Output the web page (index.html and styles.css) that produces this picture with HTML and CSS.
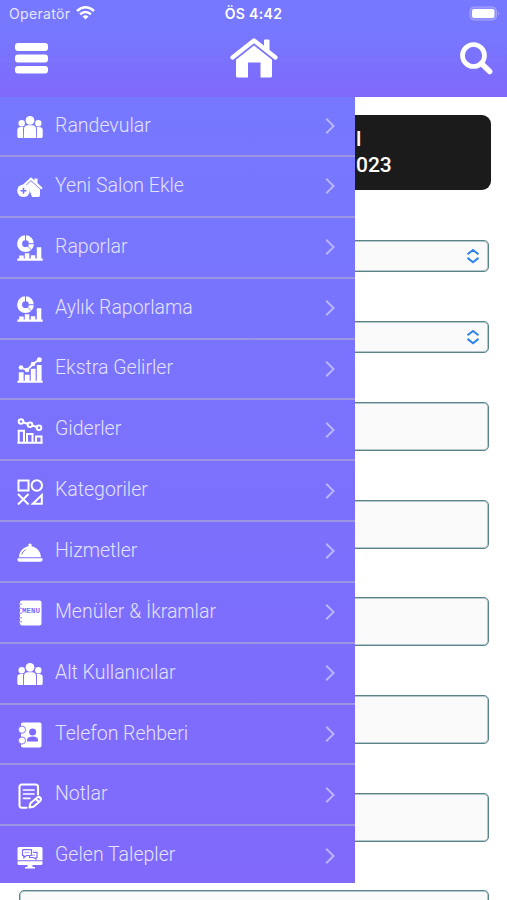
FILE: index.html
```html
<!DOCTYPE html>
<html lang="tr">
<head>
<meta charset="utf-8">
<title>Menü</title>
<link rel="stylesheet" href="styles.css">
</head>
<body>
<svg class="defs" width="0" height="0">
  <symbol id="people" viewBox="0 0 26 26">
    <circle cx="4.700" cy="9.200" r="3.200"/><circle cx="21.300" cy="9.200" r="3.200"/><circle cx="13" cy="6.400" r="4.400"/>
    <path d="M7 24V15.500Q7 11.300 11 11.300H15Q19 11.300 19 15.500V24ZM6.200 24H2Q.300 24 .300 22.500V16Q.300 13 4 13H6.400Q6 14 6 15.500ZM19.800 24H24Q25.700 24 25.700 22.500V16Q25.700 13 22 13H19.600Q20 14 20 15.500Z"/>
  </symbol>
  <symbol id="salon" viewBox="0 0 26 26">
    <path d="M5 11.500L14 3.300L17.500 6.300V4.500H20.500V9.100L25.700 14L24.200 15.500L14 6.200L7 12.500Z"/>
    <path d="M14 7.200L23 15.200V21Q23 23 21.500 23H15L11.500 13.200L8 12.200Z"/>
    <circle cx="6.500" cy="16.800" r="6.300"/><path d="M6.500 13.800V19.800M3.500 16.800H9.500" stroke="#7774ff" stroke-width="1.600"/>
  </symbol>
  <symbol id="report" viewBox="0 0 26 26">
    <circle cx="8.500" cy="8.700" r="5.900" fill="none" stroke="currentColor" stroke-width="5"/>
    <path d="M8.500 0V6M12 8.700H17.500" stroke="#7774ff" stroke-width="1"/>
    <path d="M10.500 11L14.500 15" stroke="#7774ff" stroke-width=".8"/>
    <path d="M.3 23.600H25.700V25.700H.3ZM2.200 20.500H6.700V24H2.200ZM7.800 18.200H12.300V24H7.800ZM13.800 20.200H18.300V24H13.800ZM19.800 12.200H24.300V24H19.800Z"/>
  </symbol>
  <symbol id="growth" viewBox="0 0 26 26">
    <path d="M.3 23.800H25.700V25.700H.3ZM1.800 15.300H6.600V24.500H1.800ZM7.800 17.800H12.600V24.500H7.800ZM13.800 11.800H18.600V24.500H13.800ZM19.800 8H24.600V24.500H19.800Z"/>
    <path d="M4 10.500L10 13.200L16 7L22 2.800" fill="none" stroke="currentColor" stroke-width="1.800"/>
    <circle cx="4" cy="10.500" r="2.300"/><circle cx="10" cy="13" r="2.300"/><circle cx="16" cy="7" r="2.300"/><circle cx="22.300" cy="2.800" r="2.500"/>
  </symbol>
  <symbol id="decline" viewBox="0 0 26 26">
    <g fill="none" stroke="currentColor" stroke-width="2">
      <circle cx="4" cy="3.500" r="2.300"/><circle cx="13" cy="6.700" r="2.300"/><circle cx="22" cy="9.700" r="2.300"/>
      <path d="M6 4.300L11 6M15 7.400L20 9M.3 24.800H25.700M1.700 25V12.800H7V25M10 25V16H15.500V25M19 25V18.500H24.500V25"/>
    </g>
  </symbol>
  <symbol id="shapes" viewBox="0 0 26 26">
    <g fill="none" stroke="currentColor" stroke-width="2">
      <rect x="1.500" y="1.500" width="10" height="10"/><circle cx="19.800" cy="6.500" r="5.200"/>
      <path d="M1 15L11.500 25.500M11.500 15L1 25.500M24.800 16V24.700H15.800Z"/>
    </g>
  </symbol>
  <symbol id="cloche" viewBox="0 0 26 26">
    <path d="M2 18.300C2.300 12 6.500 8 11.500 7.300Q10.800 4.500 13 4.500T14.500 7.300C19.500 8 23.700 12 24 18.300ZM.5 19.300H25.500V20.800Q25.500 22.700 23.500 22.700H2.500Q.5 22.700 .5 20.800Z"/>
    <path d="M4.700 15.500Q5.500 12.300 8.500 10.800" fill="none" stroke="#7c6eff" stroke-width="1"/>
  </symbol>
  <symbol id="contacts" viewBox="0 0 26 26">
    <rect x="4" y=".5" width="20.500" height="25" rx="1.800"/>
    <g stroke="#7f6aff" stroke-width=".9"><circle cx="5" cy="7.700" r="3.600"/><circle cx="5" cy="18.500" r="3.600"/></g>
    <g fill="#7f6aff"><circle cx="15.600" cy="10" r="3.500"/><path d="M10 19.500V18Q10 14.500 15.600 14.500T21 18V19.500Z"/></g>
  </symbol>
  <symbol id="note" viewBox="0 0 26 26">
    <g fill="none" stroke="currentColor" stroke-width="2.100" stroke-linecap="round" stroke-linejoin="round">
      <path d="M9.500 24.700H5Q2.500 24.700 2.500 22.200V4Q2.500 1.500 5 1.500H18.500Q21 1.500 21 4V11.500"/>
      <path d="M6.500 7H17M6.500 11H17M6.500 15.300H13" stroke-width="1.700"/>
      <path d="M12.500 24.500L13.400 20.200L20.500 14.300Q22 13.400 23.300 14.700T23.200 18L16.500 23.700ZM19 16L21.700 19"/>
    </g>
  </symbol>
  <symbol id="requests" viewBox="0 0 26 26">
    <path d="M2 3H24Q25.500 3 25.500 4.500V16.200H.5V4.500Q.5 3 2 3ZM.5 17.200H25.500V19.500Q25.500 21 24 21H15.500V23H18V24.500H8V23H10.500V21H2Q.5 21 .5 19.500Z"/>
    <path d="M6 5.700H14.500V11.500H9.500L6.800 13.700V11.500H5.500V6.200ZM16 8.300H20V13.500H19V15.200L16.500 13.500H12.500V12" fill="none" stroke="#806aff" stroke-width="1.200"/>
    <path d="M7.500 8.600H12.500M14.500 11.200H18" stroke="#a9a0ff" stroke-width="1"/>
  </symbol>
  <symbol id="chevron" viewBox="0 0 10 18"><path d="M1.200 1.700L8.600 9L1.200 16.300" fill="none" stroke="#bbb6ff" stroke-width="1.900"/></symbol>
  <symbol id="updown" viewBox="0 0 14 16"><path d="M1.500 6.200L7 1.900L12.500 6.200M1.500 9.900L7 14.200L12.500 9.900" fill="none" stroke="#2e83ea" stroke-width="2"/></symbol>
</svg>

<div class="screen">
  <header class="top">
    <div class="status">
      <div class="carrier"><span>Operatör</span>
        <svg width="19" height="14" viewBox="0 0 19 14"><g fill="none" stroke="#fff" stroke-width="2.500"><path d="M1 5Q9.500-2.400 18 5"/><path d="M4.100 8.300Q9.500 3.600 14.900 8.300"/></g><path d="M6.500 10.600Q9.500 8 12.500 10.600L9.500 13.600Z" fill="#fff"/></svg>
      </div>
      <div class="clock">ÖS 4:42</div>
      <div class="battery">
        <svg width="32" height="15" viewBox="0 0 32 15"><rect x="1" y="1" width="26.500" height="13" rx="4" fill="#8d8dff" stroke="#a5a4ff"/><rect x="3" y="3" width="22.500" height="9" rx="2" fill="#fff"/><path d="M29 5.500Q31 7.500 29 9.500Z" fill="#a5a4ff"/></svg>
      </div>
    </div>
    <nav class="bar">
      <svg width="33" height="31" viewBox="0 0 33 31" fill="#fff"><rect width="33" height="8" rx="3"/><rect y="11.500" width="33" height="8" rx="3"/><rect y="23" width="33" height="7.500" rx="3"/></svg>
      <svg width="48" height="42" viewBox="0 0 48 42"><path d="M2.500 20.500L24 3.500L45.500 20.500" fill="none" stroke="#fff" stroke-width="4.200" stroke-linecap="round" stroke-linejoin="round"/><path d="M34 3.500Q34 2.500 35 2.500H38.500Q39.500 2.500 39.500 3.500V14.500L34 10ZM24 8.500L42 22.700V39Q42 40.500 40.500 40.500H30.500V25.500H18V40.500H7.500Q6 40.500 6 39V22.700Z" fill="#fff"/></svg>
      <svg width="33" height="33" viewBox="0 0 33 33"><circle cx="13.500" cy="13.500" r="11" fill="none" stroke="#fff" stroke-width="4.700"/><path d="M21.500 21.500L29.700 29.500" stroke="#fff" stroke-width="5.400" stroke-linecap="round"/></svg>
    </nav>
  </header>

  <main class="form">
    <div class="summary"><span>l</span><span>023</span></div>
    <div class="field select"><svg width="14" height="16"><use href="#updown"/></svg></div>
    <div class="field select"><svg width="14" height="16"><use href="#updown"/></svg></div>
    <div class="field"></div>
    <div class="field"></div>
    <div class="field"></div>
    <div class="field"></div>
    <div class="field"></div>
    <div class="field"></div>
  </main>

  <aside class="drawer">
    <a class="item"><svg class="ico"><use href="#people"/></svg><span>Randevular</span><svg class="chev"><use href="#chevron"/></svg></a>
    <a class="item"><svg class="ico"><use href="#salon"/></svg><span>Yeni Salon Ekle</span><svg class="chev"><use href="#chevron"/></svg></a>
    <a class="item"><svg class="ico"><use href="#report"/></svg><span>Raporlar</span><svg class="chev"><use href="#chevron"/></svg></a>
    <a class="item"><svg class="ico"><use href="#report"/></svg><span>Aylık Raporlama</span><svg class="chev"><use href="#chevron"/></svg></a>
    <a class="item"><svg class="ico"><use href="#growth"/></svg><span>Ekstra Gelirler</span><svg class="chev"><use href="#chevron"/></svg></a>
    <a class="item"><svg class="ico"><use href="#decline"/></svg><span>Giderler</span><svg class="chev"><use href="#chevron"/></svg></a>
    <a class="item"><svg class="ico"><use href="#shapes"/></svg><span>Kategoriler</span><svg class="chev"><use href="#chevron"/></svg></a>
    <a class="item"><svg class="ico"><use href="#cloche"/></svg><span>Hizmetler</span><svg class="chev"><use href="#chevron"/></svg></a>
    <a class="item">
      <svg class="ico" viewBox="0 0 26 26">
        <path d="M5 .5H22.500Q24.500 .5 24.500 2.500V23.500Q24.500 25.500 22.500 25.500H5Q3 25.500 3 23.500V22.600H2V21H3V18.500H2V17H3V14H2V12.400H3V9H2V7.400H3V5H2V3.400H3V2.500Q3 .5 5 .5Z"/>
        <path d="M2 4.200H5M2 8.200H5M2 13.200H5M2 17.800H5M2 21.800H5" stroke="#7d6cff" stroke-width=".9"/>
        <text x="14" y="13.200" text-anchor="middle" class="tiny">MENU</text>
      </svg><span>Menüler &amp; İkramlar</span><svg class="chev"><use href="#chevron"/></svg></a>
    <a class="item"><svg class="ico"><use href="#people"/></svg><span>Alt Kullanıcılar</span><svg class="chev"><use href="#chevron"/></svg></a>
    <a class="item"><svg class="ico"><use href="#contacts"/></svg><span>Telefon Rehberi</span><svg class="chev"><use href="#chevron"/></svg></a>
    <a class="item"><svg class="ico"><use href="#note"/></svg><span>Notlar</span><svg class="chev"><use href="#chevron"/></svg></a>
    <a class="item"><svg class="ico"><use href="#requests"/></svg><span>Gelen Talepler</span><svg class="chev"><use href="#chevron"/></svg></a>
  </aside>
</div>
</body>
</html>
```
FILE: styles.css
```css
* { box-sizing: border-box; }
body { margin: 0; background: #fff; font-family: Roboto, "Liberation Sans", sans-serif; }
.defs { position: absolute; }
svg { display: block; flex: none; }
.screen { position: relative; height: 900px; overflow: hidden; }

.top { height: 97px; background: linear-gradient(#7678ff, #7678ff 30%, #8069fb); color: #fff; }
.status { display: grid; grid-template-columns: 1fr auto 1fr; align-items: center; height: 27px; padding: 0 6px 0 9px; font: 400 14px/27px Inter, sans-serif; }
.carrier { display: flex; align-items: center; gap: 6px; color: #e6e6ff; letter-spacing: .32px; }
.carrier svg { margin-top: -1px; }
.clock { margin-left: -3px; font-weight: 600; font-size: 14px; letter-spacing: .35px; }
.battery { justify-self: end; }
.bar { display: flex; justify-content: space-between; align-items: center; height: 62px; padding: 0 14px 0 15px; }

.form { display: flex; flex-direction: column; padding: 18px 18px 0 19px; }
.summary { display: flex; flex-direction: column; height: 75px; margin: 0 -2px 50px -1px; padding: 11px 0 0 338px; border-radius: 9px; background: #1b1b1b; color: #fff; font-size: 21px; font-weight: 500; line-height: 26px; }
.field { flex: none; height: 49px; margin-bottom: 48.700px; border: 1px solid #5a848a; border-radius: 5px; background: #fafafa; box-shadow: inset 0 0 0 1px #b4c7ca; }
.select { display: flex; align-items: center; justify-content: flex-end; height: 32px; margin-bottom: 49px; padding-right: 8px; }

.drawer { position: absolute; left: 0; top: 97px; width: 355px; height: 786px; overflow: hidden; background: linear-gradient(#7678ff, #8069fb); }
.item { display: flex; align-items: center; height: 60.850px; padding: 0 20px 0 17px; border-bottom: 2px solid #9c96e2; color: #e4e2ff; font-size: 19.500px; font-weight: 300; }
.item:first-child { height: 60px; }
.ico { width: 26px; height: 26px; margin-right: 12px; margin-top: 2px; fill: currentColor; color: #fff; }
.item span { flex: 1; line-height: 24px; margin-top: -1px; }
.chev { width: 10px; height: 18px; }
.tiny { font: 700 7.500px "Liberation Mono", monospace; fill: #7d6cff; }
```
